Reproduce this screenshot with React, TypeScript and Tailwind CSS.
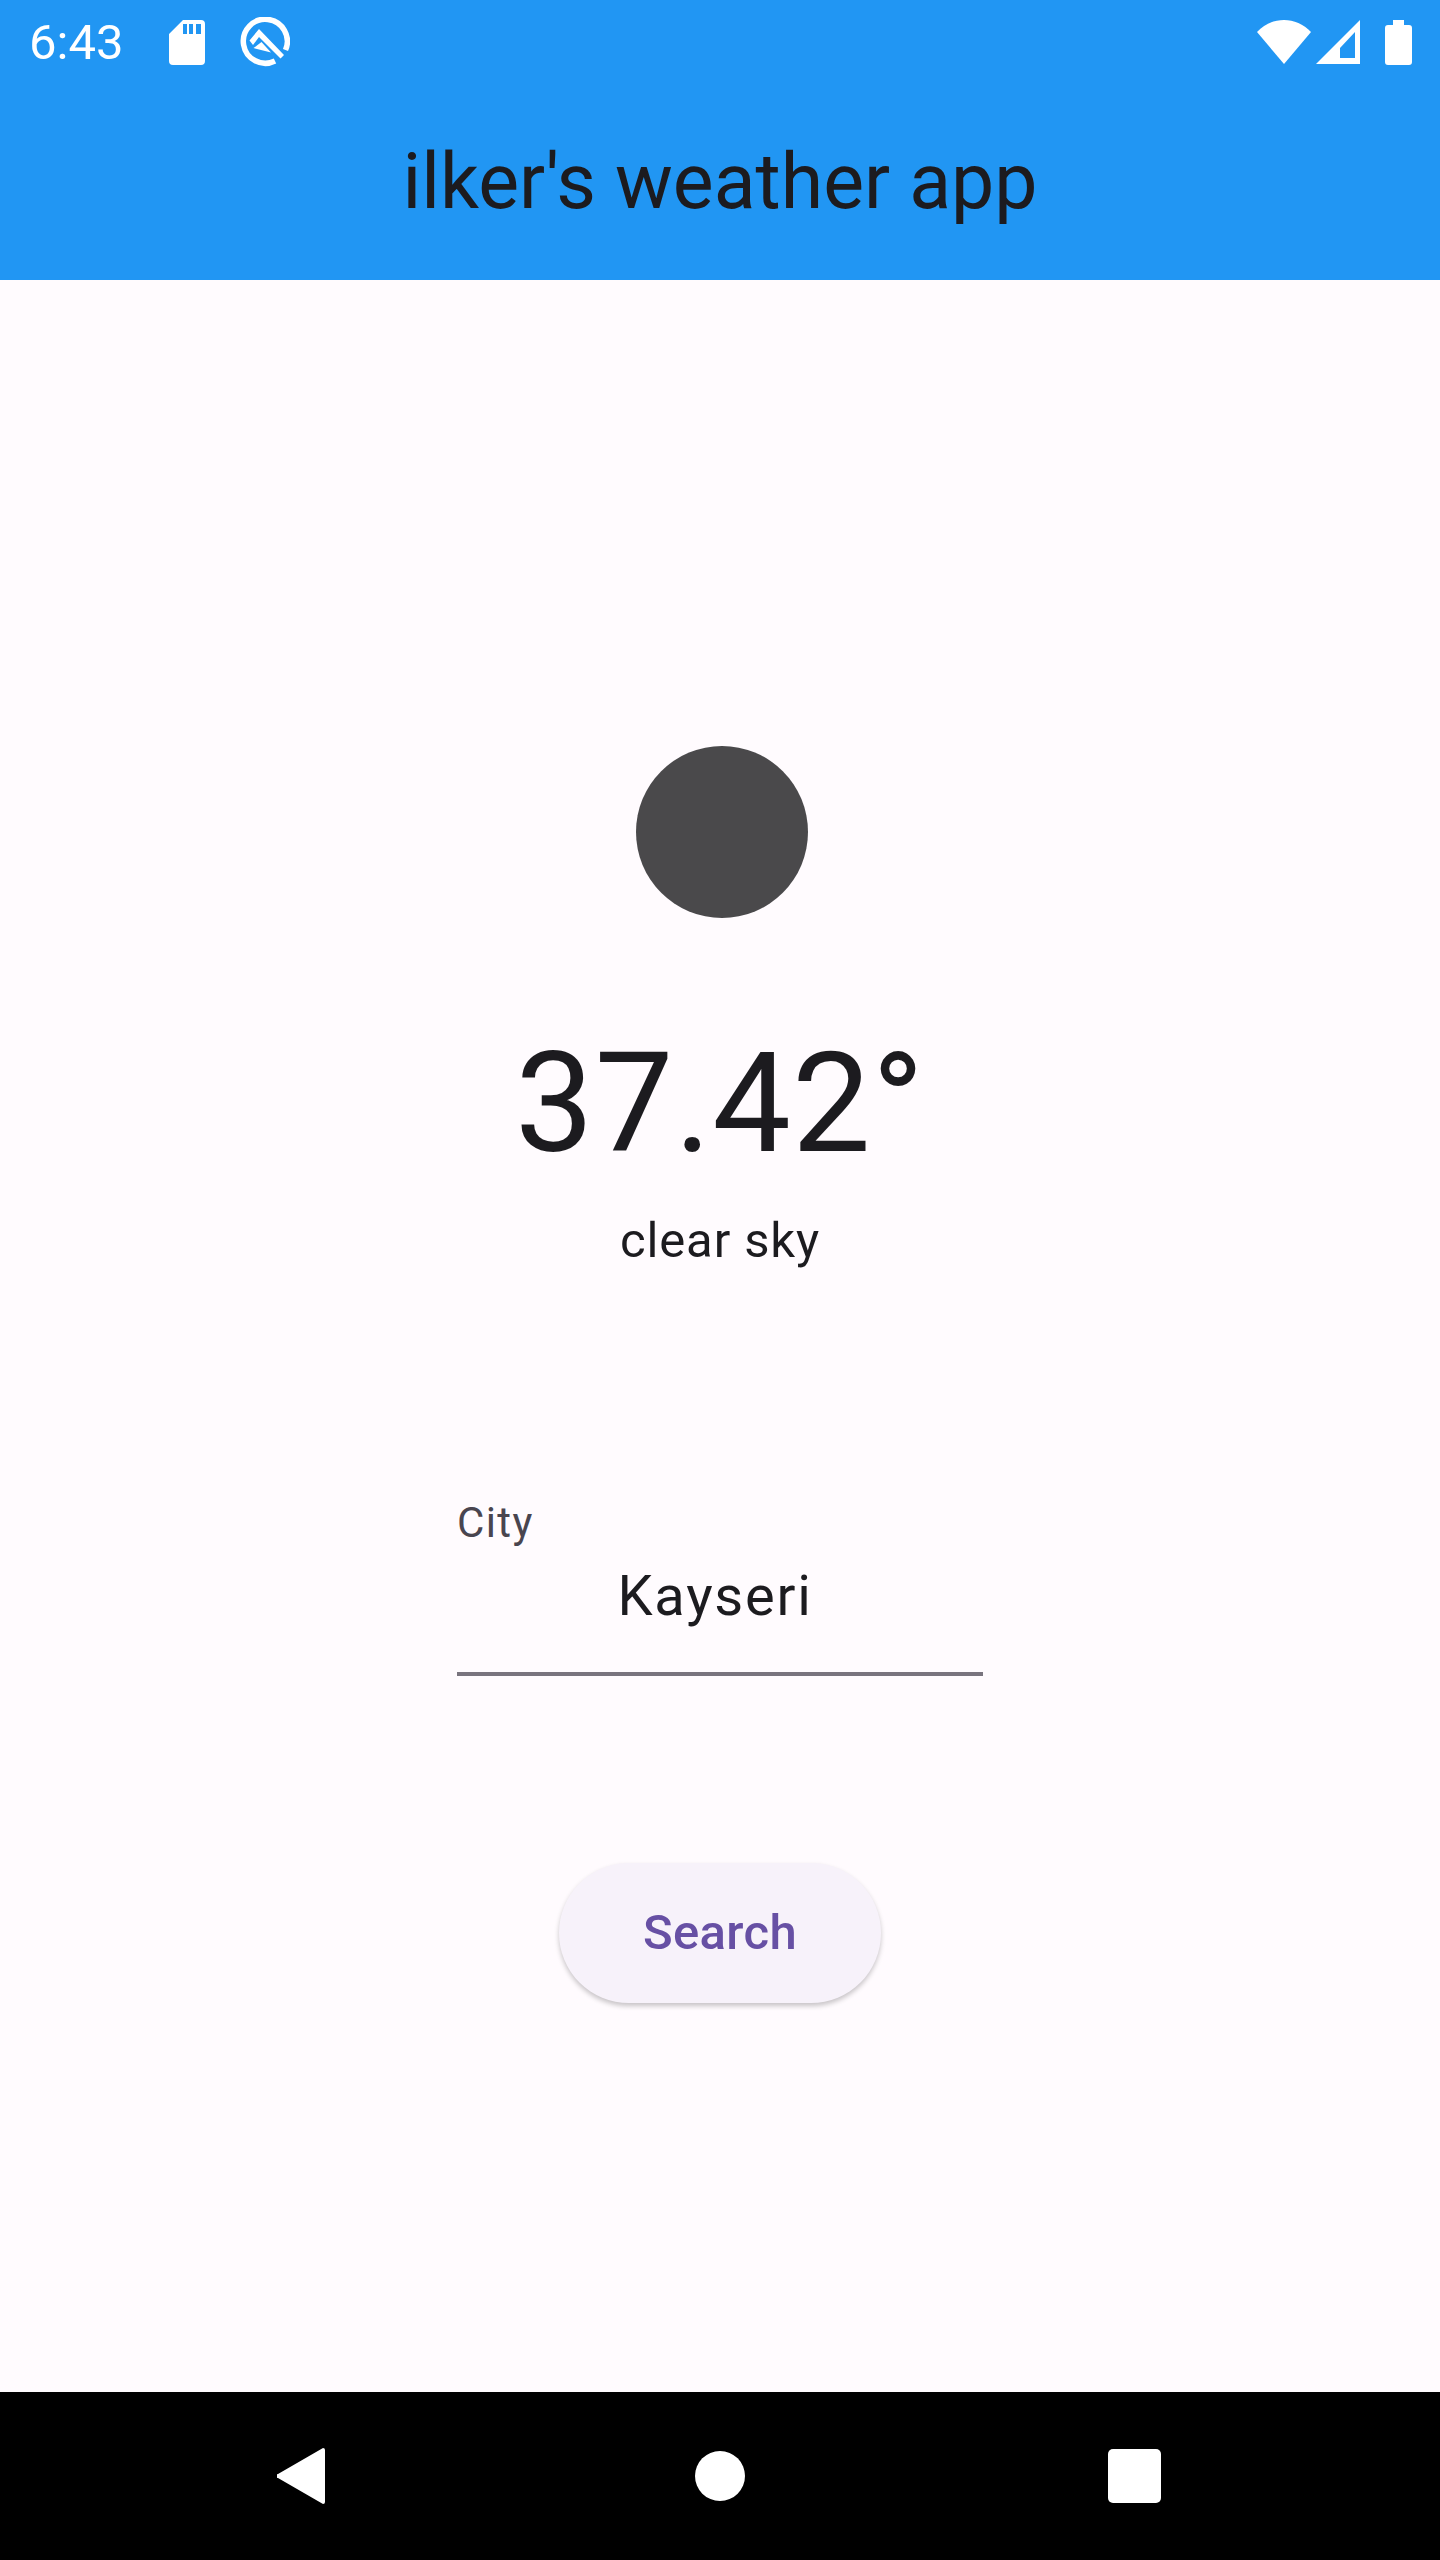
const roboto = "font-['Roboto',sans-serif]";

function SdCardIcon() {
  return (
    <svg width="36" height="45" viewBox="0 0 36 45" fill="#fff">
      <path
        fillRule="evenodd"
        d="M14 0H32a4 4 0 0 1 4 4V41a4 4 0 0 1-4 4H4a4 4 0 0 1-4-4V14ZM14 4v10h4V4ZM20 4v10h4V4ZM27 4v10h5V4Z"
      />
    </svg>
  );
}

// Android Q system logo
function QIcon() {
  return (
    <svg width="50" height="50" viewBox="0 0 50 50" fill="none">
      <path d="M35 44A22 22 0 1 1 45.5 33" stroke="#fff" strokeWidth="5.5" />
      <path d="M19 12L44 38L40.5 41.5L19 20L13 28L9.5 23.5Z" fill="#fff" />
      <path d="M21.5 25L31 35.5L13.5 31Z" fill="#fff" />
    </svg>
  );
}

function WifiIcon() {
  return (
    <svg width="54" height="44" viewBox="0 0 54 44" fill="#fff">
      <path d="M0 12C15-4 39-4 54 12L27 44Z" />
    </svg>
  );
}

function SignalIcon() {
  return (
    <svg width="44" height="44" viewBox="0 0 44 44" fill="#fff">
      <path fillRule="evenodd" d="M44 0V44H0ZM39 12L24 28V38H39Z" />
    </svg>
  );
}

function BatteryIcon() {
  return (
    <svg width="27" height="45" viewBox="0 0 27 45" fill="#fff">
      <path d="M8 0H19V5H24a3 3 0 0 1 3 3V42a3 3 0 0 1-3 3H3a3 3 0 0 1-3-3V8a3 3 0 0 1 3-3H8Z" />
    </svg>
  );
}

function StatusBar() {
  return (
    <div className="flex h-[84px] items-center justify-between pl-[29px] pr-[28px] text-white">
      <div className="flex items-center">
        <span className={`${roboto} text-[49px] leading-none`}>6:43</span>
        <div className="ml-[46px]">
          <SdCardIcon />
        </div>
        <div className="ml-[35px]">
          <QIcon />
        </div>
      </div>
      <div className="flex items-center">
        <WifiIcon />
        <div className="ml-[5px]">
          <SignalIcon />
        </div>
        <div className="ml-[25px]">
          <BatteryIcon />
        </div>
      </div>
    </div>
  );
}

function NavBar() {
  return (
    <div className="flex h-[168px] items-center bg-black pl-[277px]">
      <svg width="48" height="56" viewBox="0 0 48 56" fill="#fff">
        <path d="M46 0a2 2 0 0 1 2 2V54a2 2 0 0 1-2 2L1 30a2 2 0 0 1 0-4Z" />
      </svg>
      <div className="ml-[370px] h-[50px] w-[50px] rounded-full bg-white" />
      <div className="ml-[363px] h-[54px] w-[53px] rounded-[5px] bg-white" />
    </div>
  );
}

export default function App() {
  return (
    <div className={`${roboto} flex h-[2560px] w-[1440px] flex-col bg-[#fffbfe]`}>
      <header className="h-[280px] bg-[#2196f3]">
        <StatusBar />
        <div className="flex h-[196px] items-center justify-center text-[77px] leading-none text-[#1c1b1f]">
          ilker's weather app
        </div>
      </header>

      <main className="flex flex-1 flex-col items-center">
        <div className="ml-[3px] mt-[466px] h-[172px] w-[172px] rounded-full bg-[#4a494b]" />
        <div className="mt-[103px] text-[140px] leading-[164px] tracking-[1px] text-[#1c1b1f]">37.42°</div>
        <div className="mt-[21px] text-[49px] leading-[70px] tracking-[0.88px] text-[#1c1b1f]">clear sky</div>

        <div className="mt-[222px] w-[526px]">
          <div className="text-[42px] leading-[50px] tracking-[1.4px] text-[#49454f]">City</div>
          <div className="h-[128px] border-b-4 border-[#79747e] pr-[10px] pt-[15px] text-center text-[56px] leading-[66px] tracking-[1.75px] text-[#1c1b1f]">
            Kayseri
          </div>
        </div>

        <button className="mt-[187px] flex h-[140px] w-[322px] items-center justify-center rounded-full bg-[#f7f2fa] text-[49px] font-medium tracking-[0.35px] text-[#6750a4] shadow-[0_3px_5px_rgba(0,0,0,0.22)]">
          Search
        </button>
      </main>

      <NavBar />
    </div>
  );
}
